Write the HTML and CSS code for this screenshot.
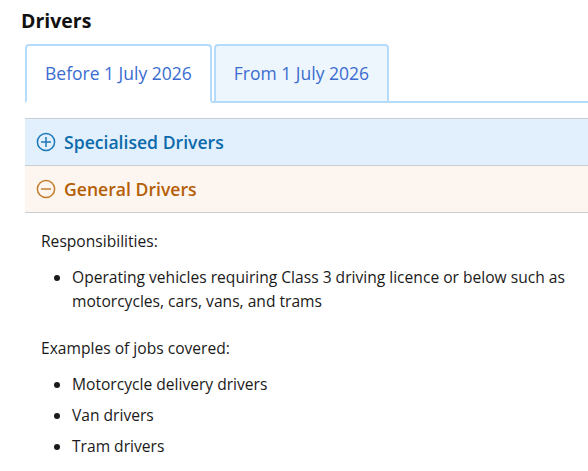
FILE: index.html
```html
<!DOCTYPE html>
<html lang="en">
<head>
<meta charset="utf-8">
<title>Drivers</title>
<link rel="stylesheet" href="styles.css">
</head>
<body>
<div class="page">
  <h2 class="title">Drivers</h2>
  <div class="panel">
    <div class="tabs" role="tablist">
      <div class="tab tab-active" role="tab">Before 1 July 2026</div>
      <div class="tab" role="tab">From 1 July 2026</div>
    </div>
    <div class="accordion">
      <div class="acc-item acc-blue">
        <div class="acc-head">
          <svg class="acc-icon" viewBox="0 0 20 20" width="20" height="20"><circle cx="10" cy="10" r="8.6" fill="none" stroke="currentColor" stroke-width="1.5"/><path d="M10 5v10M5 10h10" stroke="currentColor" stroke-width="1.5" fill="none"/></svg>
          <span>Specialised Drivers</span>
        </div>
      </div>
      <div class="acc-item acc-orange">
        <div class="acc-head">
          <svg class="acc-icon" viewBox="0 0 20 20" width="20" height="20"><circle cx="10" cy="10" r="8.6" fill="none" stroke="currentColor" stroke-width="1.5"/><path d="M5 10h10" stroke="currentColor" stroke-width="1.5" fill="none"/></svg>
          <span>General Drivers</span>
        </div>
        <div class="acc-body">
          <p class="label">Responsibilities:</p>
          <ul class="list">
            <li>Operating vehicles requiring Class 3 driving licence or below such as motorcycles, cars, vans, and trams</li>
          </ul>
          <p class="label">Examples of jobs covered:</p>
          <ul class="list">
            <li>Motorcycle delivery drivers</li>
            <li>Van drivers</li>
            <li>Tram drivers</li>
          </ul>
        </div>
      </div>
    </div>
  </div>
</div>
</body>
</html>
```
FILE: styles.css
```css
html, body {
  margin: 0;
  padding: 0;
  overflow: hidden;
  background: #ffffff;
}
body {
  font-family: "Open Sans", "Liberation Sans", sans-serif;
  color: #1a1a1a;
}
.page {
  padding: 7px 0 0 21px;
  width: 640px;
}
.title {
  margin: 0;
  font-size: 19.5px;
  line-height: 28px;
  font-weight: 700;
  color: #111111;
}
.panel {
  margin: 9px 0 0 4px;
  width: 620px;
}
.tabs {
  display: flex;
  gap: 2px;
  border-bottom: 2px solid #b5dbfb;
}
.tab {
  margin-bottom: -2px;
  border: 2px solid #b5dbfb;
  border-radius: 4px 4px 0 0;
  background: #eef6fd;
  color: #3a6cd0;
  font-size: 17.5px;
  line-height: 25px;
  padding: 15px 18px;
}
.tab-active {
  background: #ffffff;
  border-bottom-color: #ffffff;
}
.accordion {
  margin-top: 15px;
  border-top: 1px solid #c9ced3;
}
.acc-head {
  display: flex;
  align-items: center;
  gap: 8px;
  height: 46px;
  padding-left: 11px;
  font-size: 17.6px;
  font-weight: 600;
  border-bottom: 1px solid #c9ced3;
}
.acc-icon {
  flex: none;
}
.acc-blue .acc-head {
  background: #e1f0fc;
  color: #0b6aab;
}
.acc-blue .acc-icon {
  color: #1b77bb;
}
.acc-orange .acc-head {
  background: #fdf5ef;
  color: #b45f08;
}
.acc-orange .acc-icon {
  color: #c47f2c;
}
.acc-body {
  padding: 16px 16px 8px 16px;
  font-size: 15.6px;
  line-height: 24px;
  color: #1a1a1a;
}
.label {
  margin: 0;
}
.list {
  margin: 12px 0 23px 0;
  padding-left: 31px;
}
.list li + li {
  margin-top: 7px;
}
```
